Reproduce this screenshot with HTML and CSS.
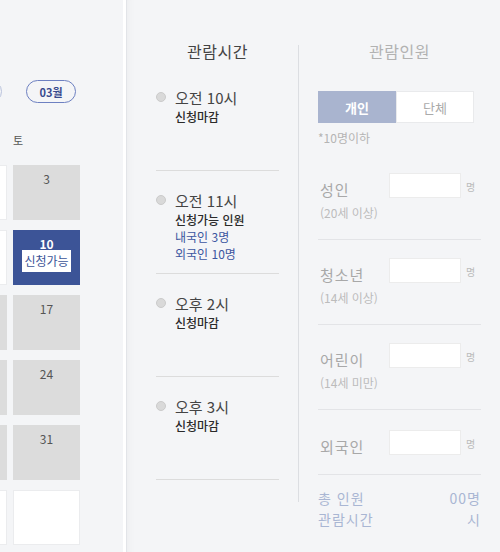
FILE: index.html
```html
<!DOCTYPE html>
<html lang="ko">
<head>
<meta charset="utf-8">
<title>관람 예약</title>
<link rel="stylesheet" href="styles.css">
</head>
<body>
<div class="page">
  <section class="cal-panel">
    <div class="cal">
      <div class="month-nav">
        <span class="month-pill prev" aria-label="이전 달"></span>
        <span class="month-pill">03월</span>
      </div>
      <div class="weekdays">
        <span></span><span>토</span>
      </div>
      <div class="days">
        <div class="day off"></div><div class="day">3</div>
        <div class="day off"></div><div class="day on">10<span class="badge">신청가능</span></div>
        <div class="day"></div><div class="day">17</div>
        <div class="day"></div><div class="day">24</div>
        <div class="day"></div><div class="day">31</div>
        <div class="day off"></div><div class="day off"></div>
      </div>
    </div>
  </section>

  <section class="book-panel">
    <div class="times">
      <h2 class="col-title">관람시간</h2>
      <div class="slot first">
        <div class="slot-time"><span class="radio"></span>오전 10시</div>
        <div class="slot-info"><p class="status">신청마감</p></div>
      </div>
      <div class="slot">
        <div class="slot-time"><span class="radio"></span>오전 11시</div>
        <div class="slot-info">
          <p class="status">신청가능 인원</p>
          <p class="count">내국인 3명</p>
          <p class="count">외국인 10명</p>
        </div>
      </div>
      <div class="slot">
        <div class="slot-time"><span class="radio"></span>오후 2시</div>
        <div class="slot-info"><p class="status">신청마감</p></div>
      </div>
      <div class="slot">
        <div class="slot-time"><span class="radio"></span>오후 3시</div>
        <div class="slot-info"><p class="status">신청마감</p></div>
      </div>
    </div>

    <div class="people">
      <h2 class="col-title muted">관람인원</h2>
      <div class="toggle">
        <span class="tab active">개인</span>
        <span class="tab">단체</span>
      </div>
      <p class="note">*10명이하</p>

      <div class="row">
        <div class="row-label"><span class="name">성인</span><span class="age">(20세 이상)</span></div>
        <input class="count-input" type="text">
        <span class="unit">명</span>
      </div>
      <div class="row">
        <div class="row-label"><span class="name">청소년</span><span class="age">(14세 이상)</span></div>
        <input class="count-input" type="text">
        <span class="unit">명</span>
      </div>
      <div class="row">
        <div class="row-label"><span class="name">어린이</span><span class="age">(14세 미만)</span></div>
        <input class="count-input" type="text">
        <span class="unit">명</span>
      </div>
      <div class="row row-last">
        <div class="row-label"><span class="name">외국인</span></div>
        <input class="count-input" type="text">
        <span class="unit">명</span>
      </div>

      <div class="totals">
        <div class="total-line"><span>총 인원</span><span>00명</span></div>
        <div class="total-line"><span>관람시간</span><span>시</span></div>
      </div>
    </div>
  </section>
</div>
</body>
</html>
```

FILE: styles.css
```css
html, body {
  margin: 0;
  padding: 0;
  background: #ffffff;
}

body {
  width: 500px;
  height: 552px;
  overflow: hidden;
  font-family: "Noto Sans CJK KR", "Noto Sans", sans-serif;
}

p, h2 {
  margin: 0;
}

.page {
  display: flex;
  height: 552px;
}

/* ---------- calendar ---------- */
.cal-panel {
  width: 123px;
  flex: none;
  background: #f4f5f7;
  overflow: hidden;
  padding-top: 80px;
  box-sizing: border-box;
}

.cal {
  width: 140px;
  margin-left: -60px;
}

.month-nav {
  display: flex;
  justify-content: flex-end;
  gap: 24px;
  padding-right: 4px;
}

.month-pill {
  width: 50px;
  height: 23px;
  box-sizing: border-box;
  border: 1.5px solid #6d80c1;
  border-radius: 12px;
  display: flex;
  align-items: center;
  justify-content: center;
  font-size: 11px;
  font-weight: 700;
  color: #3a4b8e;
}

.month-pill.prev {
  border-color: #b9c2dc;
}

.weekdays {
  display: grid;
  grid-template-columns: repeat(2, 67px);
  column-gap: 6px;
  margin-top: 29px;
  font-size: 11px;
  line-height: 16px;
  color: #555;
}

.days {
  display: grid;
  grid-template-columns: repeat(2, 67px);
  grid-auto-rows: 55px;
  gap: 10px 6px;
  margin-top: 17px;
}

.day {
  background: #dcdcdc;
  text-align: center;
  font-size: 12px;
  line-height: 13px;
  padding-top: 7px;
  color: #555;
  box-sizing: border-box;
}

.day.off {
  background: #ffffff;
  border: 1px solid #ebecee;
}

.day.on {
  background: #3c5497;
  color: #ffffff;
  font-weight: 700;
}

.badge {
  display: block;
  width: fit-content;
  margin: 0 auto;
  background: #ffffff;
  color: #3c5497;
  font-weight: 400;
  font-size: 12px;
  line-height: 22px;
  padding: 0 2px;
}

/* ---------- booking ---------- */
.book-panel {
  flex: 1;
  margin-left: 3px;
  background: #f4f5f7;
  border-left: 1px solid #e2e4e8;
  box-shadow: inset 10px 0 10px -10px rgba(0, 0, 0, 0.05);
  display: flex;
  align-items: flex-start;
  padding-top: 45px;
  box-sizing: border-box;
}

.col-title {
  margin-top: -4px;
  font-size: 16px;
  line-height: 20px;
  font-weight: 400;
  text-align: center;
  color: #444;
  letter-spacing: 0.5px;
}

.col-title.muted {
  color: #b2b2b2;
}

.times {
  width: 172px;
  flex: none;
  height: 457px;
  box-sizing: border-box;
  padding: 0 19px 0 29px;
  border-right: 1px solid #dcdee2;
}

.slot {
  height: 103px;
  box-sizing: border-box;
  padding-top: 19px;
  border-bottom: 1px solid #dcdcdc;
}

.slot.first {
  margin-top: 7px;
}

.slot-time {
  display: flex;
  align-items: center;
  font-size: 15px;
  line-height: 21px;
  color: #444;
}

.radio {
  width: 10px;
  height: 10px;
  box-sizing: border-box;
  border-radius: 50%;
  background: #d9d9d9;
  border: 1px solid #cbcbcb;
  margin-right: 9px;
  margin-top: -1px;
}

.slot-info {
  padding-left: 19px;
  font-size: 12px;
  line-height: 17px;
}

.status {
  color: #2a2a2a;
  font-weight: 500;
}

.count {
  color: #3c55a0;
}

.people {
  flex: 1;
  padding: 0 19px;
  box-sizing: border-box;
}

.toggle {
  display: flex;
  width: 156px;
  height: 32px;
  margin-top: 30px;
}

.tab {
  flex: 1;
  display: flex;
  align-items: center;
  justify-content: center;
  font-size: 13px;
  color: #aaa;
  background: #ffffff;
  border: 1px solid #e9eaec;
}

.tab.active {
  background: #a9b4cf;
  border-color: #a9b4cf;
  color: #ffffff;
  font-weight: 700;
}

.note {
  margin: 6px 0 8px;
  font-size: 12px;
  line-height: 18px;
  color: #b4b4b4;
}

.row {
  display: flex;
  align-items: flex-start;
  padding: 18px 0 17px;
  border-bottom: 1px solid #e3e4e7;
}

.row-last {
  padding-top: 20px;
}

.row-label {
  width: 71px;
  flex: none;
  box-sizing: border-box;
  padding-left: 2px;
  margin-top: 7px;
}

.name {
  display: block;
  font-size: 15px;
  line-height: 20px;
  color: #a8a8a8;
  letter-spacing: 1px;
}

.age {
  display: block;
  margin-top: 4px;
  font-size: 12px;
  line-height: 18px;
  color: #bcbcbc;
}

.count-input {
  width: 72px;
  height: 25px;
  box-sizing: border-box;
  margin: 0;
  padding: 0 4px;
  border: 1px solid #ececec;
  background: #ffffff;
  outline: none;
}

.unit {
  margin-left: 5px;
  margin-top: 7px;
  font-size: 10px;
  line-height: 14px;
  color: #bbb;
}

.totals {
  margin-top: 13px;
  font-size: 14px;
  line-height: 21px;
  color: #a9b6d3;
}

.total-line {
  display: flex;
  justify-content: space-between;
  letter-spacing: 1px;
}
```
